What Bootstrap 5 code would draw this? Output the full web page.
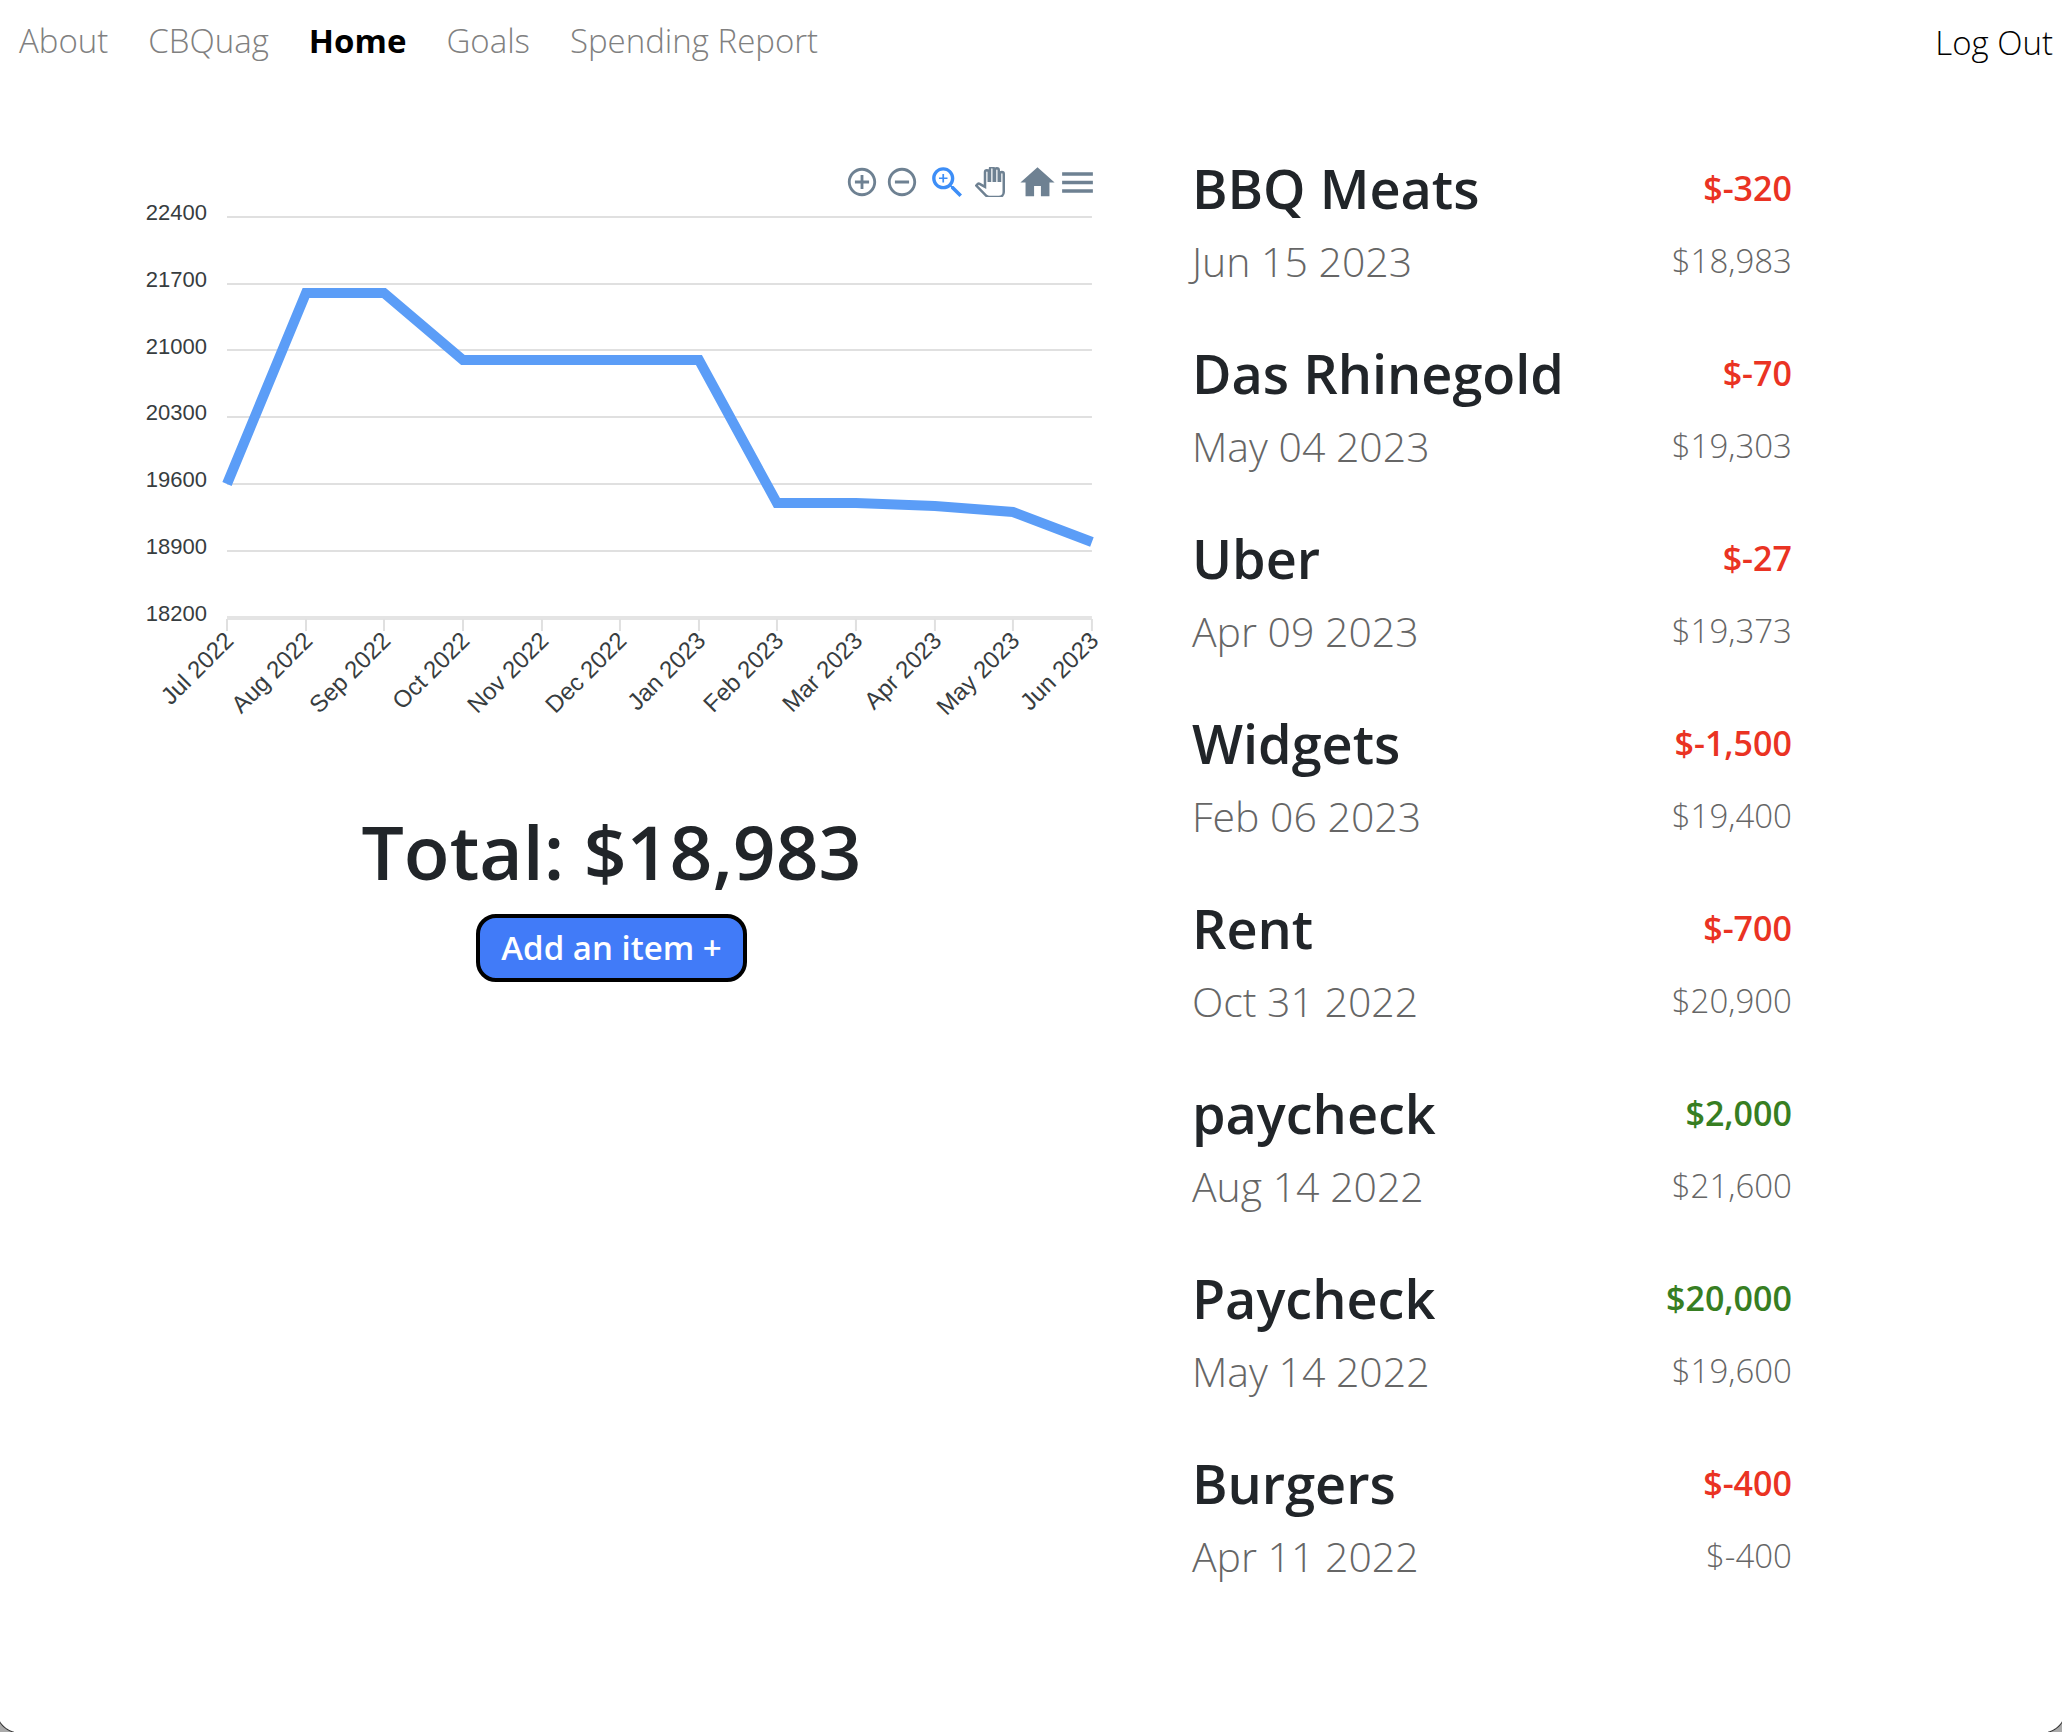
<!DOCTYPE html>
<html lang="en">
<head>
<meta charset="utf-8">
<meta name="viewport" content="width=device-width, initial-scale=1">
<title>Home</title>
<link href="https://cdn.jsdelivr.net/npm/bootstrap@5.3.0/dist/css/bootstrap.min.css" rel="stylesheet">
<style>
  body { font-family: "Open Sans", "Noto Sans", sans-serif; font-size: 33px; line-height: 48px; font-weight: 300; min-height: 100vh; }
  .site-nav { padding: 17px 9px 17px 19px; }
  .site-nav .navbar-nav { gap: 40px; }
  .site-nav .navbar-nav .nav-link { padding: 0; color: #808080; }
  .site-nav .navbar-nav .nav-link.active { color: #000; font-weight: 700; }
  .site-nav .logout { color: #000; padding-top: 2px; margin-bottom: -2px; }
  .board { display: grid; grid-template-columns: 963fr 600fr; column-gap: 99px; align-items: start; padding: 70px 13.1% 0 130px; }
  .toolbar { height: 41px; margin: 10px -5px 0 0; }
  .tool { width: 40px; height: 40px; padding: 0; border: 0; background: none; display: flex; align-items: center; justify-content: center; color: #6e8192; }
  .tool svg { fill: currentColor; flex: none; }
  .tool-on { color: #3d8ef7; margin-left: 6px; }
  .tool-pan { margin-left: 2px; }
  .tool-home { margin-left: 8px; }
  .plot { overflow: visible; }
  .plot text { font-family: "Liberation Sans", Arial, sans-serif; font-weight: 400; font-size: 22px; fill: #373d3f; text-anchor: end; }
  .plot .months text { font-size: 24px; }
  .sum { font-size: 75px; line-height: 88px; font-weight: 600; margin: 84px 0 19px; }
  .add-btn { font-size: 33px; line-height: 48px; font-weight: 600; color: #fff; background: #417bf8; border: 4px solid #000; border-radius: 20px; padding: 6px 21px; }
  .entry { height: 185px; }
  .entry-name { font-size: 54px; line-height: 72px; font-weight: 600; margin: 0; }
  .entry-date { font-size: 41px; line-height: 74px; color: #666; }
  .entry-amount { font-size: 34px; line-height: 72px; font-weight: 600; }
  .entry-balance { font-size: 33px; line-height: 74px; color: #666; }
  .minus { color: #ea3323; }
  .plus { color: #377e22; }
  .corner { position: fixed; bottom: 0; width: 14px; height: 11px; }
  .corner-l { left: 0; background: radial-gradient(circle at 20px -12px, #fff 23px, #333 24px, #aaa 25px); }
  .corner-r { right: 0; background: radial-gradient(circle at -6px -12px, #fff 23px, #333 24px, #aaa 25px); }
</style>
</head>
<body>
<nav class="navbar navbar-expand site-nav d-flex justify-content-between">
  <div class="navbar-nav">
    <a class="nav-link" href="#">About</a>
    <a class="nav-link" href="#">CBQuag</a>
    <a class="nav-link active" aria-current="page" href="#">Home</a>
    <a class="nav-link" href="#">Goals</a>
    <a class="nav-link" href="#">Spending Report</a>
  </div>
  <a class="logout text-decoration-none" href="#">Log Out</a>
</nav>
<main class="board">
  <section>
    <div class="toolbar d-flex justify-content-end">
      <button class="tool" type="button" aria-label="Zoom in"><svg width="34" height="34" viewBox="0 0 24 24"><path d="M13 7h-2v4H7v2h4v4h2v-4h4v-2h-4V7zm-1-5C6.480 2 2 6.480 2 12s4.480 10 10 10 10-4.480 10-10S17.520 2 12 2zm0 18c-4.410 0-8-3.590-8-8s3.590-8 8-8 8 3.590 8 8-3.590 8-8 8z"/></svg></button>
      <button class="tool" type="button" aria-label="Zoom out"><svg width="34" height="34" viewBox="0 0 24 24"><path d="M7 11v2h10v-2H7zm5-9C6.480 2 2 6.480 2 12s4.480 10 10 10 10-4.480 10-10S17.520 2 12 2zm0 18c-4.410 0-8-3.590-8-8s3.590-8 8-8 8 3.590 8 8-3.590 8-8 8z"/></svg></button>
      <button class="tool tool-on" type="button" aria-label="Selection zoom"><svg width="41" height="41" viewBox="0 0 24 24"><path d="M15.500 14h-.790l-.280-.270C15.410 12.590 16 11.110 16 9.500 16 5.910 13.090 3 9.500 3S3 5.910 3 9.500 5.910 16 9.500 16c1.610 0 3.090-.590 4.230-1.570l.270.280v.790l5 4.990L20.490 19l-4.990-5zm-6 0C7.010 14 5 11.990 5 9.500S7.010 5 9.500 5 14 7.010 14 9.500 11.990 14 9.500 14z"/><path d="M12 10h-2v2H9v-2H7V9h2V7h1v2h2v1z"/></svg></button>
      <button class="tool tool-pan" type="button" aria-label="Panning"><svg width="30" height="30" viewBox="0 0 24 24"><path fill="#fff" stroke="currentColor" stroke-width="2" d="M23 5.500V20c0 2.200-1.800 4-4 4h-7.300c-1.080 0-2.100-.430-2.850-1.190L1 14.830s1.260-1.230 1.300-1.250c.220-.190.490-.290.790-.290.220 0 .420.060.600.160.040.010 4.310 2.460 4.310 2.460V4c0-.830.670-1.500 1.500-1.500S11 3.170 11 4v7h1V1.500c0-.830.670-1.500 1.500-1.500S15 .670 15 1.500V11h1V2.500c0-.830.670-1.500 1.500-1.500s1.500.670 1.500 1.500V11h1V5.500c0-.830.670-1.500 1.500-1.500s1.500.670 1.500 1.500z"/></svg></button>
      <button class="tool tool-home" type="button" aria-label="Reset zoom"><svg width="41" height="41" viewBox="0 0 24 24"><path d="M10 20v-6h4v6h5v-8h3L12 3 2 12h3v8z"/></svg></button>
      <button class="tool" type="button" aria-label="Menu"><svg width="41" height="41" viewBox="0 0 24 24"><path d="M3 18h18v-2H3v2zm0-5h18v-2H3v2zm0-7v2h18V6H3z"/></svg></button>
    </div>
    <svg class="plot d-block w-100" viewBox="0 0 963 520" role="img" aria-label="Balance by month">
      <path d="M97 14H962M97 81H962M97 147H962M97 214H962M97 281H962M97 348H962" stroke="#e0e0e0" stroke-width="2"/>
      <path d="M97 415H962" stroke="#e4e4e4" stroke-width="4"/>
      <path d="M97 416v12M176 416v12M254 416v12M333 416v12M412 416v12M490 416v12M569 416v12M647 416v12M726 416v12M805 416v12M883 416v12M962 416v12" stroke="#e0e0e0" stroke-width="2"/>
      <path d="M97 281L176 90H254L333 157H569L647 300H726L805 303L883 309L962 339" fill="none" stroke="#5b9df7" stroke-width="10"/>
      <g>
        <text x="77" y="17">22400</text><text x="77" y="84">21700</text><text x="77" y="151">21000</text><text x="77" y="217">20300</text><text x="77" y="284">19600</text><text x="77" y="351">18900</text><text x="77" y="418">18200</text>
      </g>
      <g class="months">
        <text transform="translate(105 439) rotate(-45)">Jul 2022</text>
        <text transform="translate(184 439) rotate(-45)">Aug 2022</text>
        <text transform="translate(262 439) rotate(-45)">Sep 2022</text>
        <text transform="translate(341 439) rotate(-45)">Oct 2022</text>
        <text transform="translate(420 439) rotate(-45)">Nov 2022</text>
        <text transform="translate(498 439) rotate(-45)">Dec 2022</text>
        <text transform="translate(577 439) rotate(-45)">Jan 2023</text>
        <text transform="translate(655 439) rotate(-45)">Feb 2023</text>
        <text transform="translate(734 439) rotate(-45)">Mar 2023</text>
        <text transform="translate(813 439) rotate(-45)">Apr 2023</text>
        <text transform="translate(891 439) rotate(-45)">May 2023</text>
        <text transform="translate(970 439) rotate(-45)">Jun 2023</text>
      </g>
    </svg>
    <div class="text-center">
      <h1 class="sum">Total: $18,983</h1>
      <button class="btn add-btn" type="button">Add an item +</button>
    </div>
  </section>
  <ul class="list-unstyled mb-0">
    <li class="entry d-flex justify-content-between"><div><h2 class="entry-name">BBQ Meats</h2><div class="entry-date">Jun 15 2023</div></div><div class="text-end"><div class="entry-amount minus">$-320</div><div class="entry-balance">$18,983</div></div></li>
    <li class="entry d-flex justify-content-between"><div><h2 class="entry-name">Das Rhinegold</h2><div class="entry-date">May 04 2023</div></div><div class="text-end"><div class="entry-amount minus">$-70</div><div class="entry-balance">$19,303</div></div></li>
    <li class="entry d-flex justify-content-between"><div><h2 class="entry-name">Uber</h2><div class="entry-date">Apr 09 2023</div></div><div class="text-end"><div class="entry-amount minus">$-27</div><div class="entry-balance">$19,373</div></div></li>
    <li class="entry d-flex justify-content-between"><div><h2 class="entry-name">Widgets</h2><div class="entry-date">Feb 06 2023</div></div><div class="text-end"><div class="entry-amount minus">$-1,500</div><div class="entry-balance">$19,400</div></div></li>
    <li class="entry d-flex justify-content-between"><div><h2 class="entry-name">Rent</h2><div class="entry-date">Oct 31 2022</div></div><div class="text-end"><div class="entry-amount minus">$-700</div><div class="entry-balance">$20,900</div></div></li>
    <li class="entry d-flex justify-content-between"><div><h2 class="entry-name">paycheck</h2><div class="entry-date">Aug 14 2022</div></div><div class="text-end"><div class="entry-amount plus">$2,000</div><div class="entry-balance">$21,600</div></div></li>
    <li class="entry d-flex justify-content-between"><div><h2 class="entry-name">Paycheck</h2><div class="entry-date">May 14 2022</div></div><div class="text-end"><div class="entry-amount plus">$20,000</div><div class="entry-balance">$19,600</div></div></li>
    <li class="entry d-flex justify-content-between"><div><h2 class="entry-name">Burgers</h2><div class="entry-date">Apr 11 2022</div></div><div class="text-end"><div class="entry-amount minus">$-400</div><div class="entry-balance">$-400</div></div></li>
  </ul>
</main>
<div class="corner corner-l"></div>
<div class="corner corner-r"></div>
<script src="https://cdn.jsdelivr.net/npm/bootstrap@5.3.0/dist/js/bootstrap.bundle.min.js"></script>
</body>
</html>
